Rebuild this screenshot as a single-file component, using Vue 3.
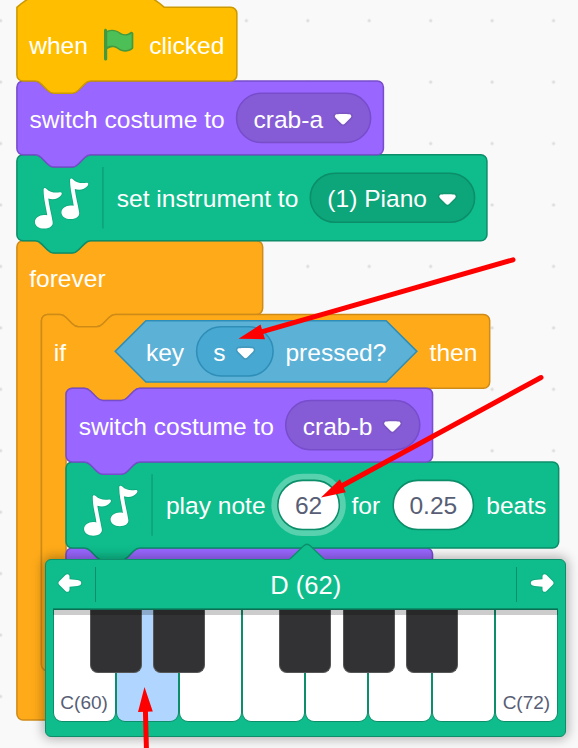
<script setup>
const NOTCH_TOP = 'c2 0 3 1 4 2l4 4c1 1 2 2 4 2h12c2 0 3-1 4-2l4-4c1-1 2-2 4-2'
const NOTCH_BOTTOM = 'c-2 0-3 1-4 2l-4 4c-1 1-2 2-4 2h-12c-2 0-3-1-4-2l-4-4c-1-1-2-2-4-2'
const START = `M0 4a4 4 0 0 1 4-4h8${NOTCH_TOP}`
const CLOSE = 'H4a4 4 0 0 1-4-4z'
const END = `H48${NOTCH_BOTTOM}${CLOSE}`

const sides = (w, h) => `H${w - 4}a4 4 0 0 1 4 4v${h - 8}a4 4 0 0 1-4 4`
const hat = (w, h) => `M0 0c25-22 71-22 96 0${sides(w, h)}${END}`
const stack = (w, h) => `${START}${sides(w, h)}${END}`
const wrap = (w, inner, end = END) =>
  `${START}${sides(w, 48)}H64${NOTCH_BOTTOM}h-8a4 4 0 0 0-4 4v${inner - 8}a4 4 0 0 0 4 4h8${NOTCH_TOP}H${w - 4}a4 4 0 0 1 4 4v24a4 4 0 0 1-4 4${end}`

const ARROW = 'M1.500 11C1.500 10 2 9.500 2.500 9L8.500 3C10 1.500 12.500 2 12.500 4.500V7.200L20.500 8C25.500 8.500 25.500 13.500 20.500 14L12.500 14.800V17.500C12.500 20 10 20.500 8.500 19L2.500 13C2 12.500 1.500 12 1.500 11z'

const blocks = [
  {
    x: 0, y: 152, kind: 'control', d: wrap(160, 232, CLOSE),
    texts: [{ x: 8, y: 30.3, t: 'forever' }],
  },
  {
    x: 0, y: 96, kind: 'music', d: stack(306, 56), icon: true,
    texts: [{ x: 65, y: 33.7, t: 'set instrument to' }, { x: 202.1, y: 33.7, t: '(1) Piano' }],
    menus: [{ x: 191, y: 12, w: 107 }],
    carets: [{ x: 274, y: 24.7 }],
  },
  {
    x: 0, y: 48, kind: 'looks', d: stack(238.6, 48),
    texts: [{ x: 8.2, y: 30.3, t: 'switch costume to' }, { x: 154, y: 30.3, t: 'crab-a' }],
    menus: [{ x: 143, y: 8, w: 87.3 }],
    carets: [{ x: 206, y: 20.5 }],
  },
  {
    x: 0, y: 0, kind: 'event', d: hat(143.2, 48), flag: true,
    texts: [{ x: 8, y: 30.3, t: 'when' }, { x: 86.2, y: 30.3, t: 'clicked' }],
  },
  {
    x: 16, y: 200, kind: 'control', d: wrap(291.8, 152), condition: true,
    texts: [
      { x: 8, y: 30.3, t: 'if' },
      { x: 68, y: 30.3, t: 'key' },
      { x: 111.8, y: 30.3, t: 's' },
      { x: 158.8, y: 30.3, t: 'pressed?' },
      { x: 252.7, y: 30.3, t: 'then' },
    ],
    menus: [{ x: 101, y: 8, w: 49.8, kind: 'sensing' }],
    carets: [{ x: 126.5, y: 20.7 }],
  },
  { x: 32, y: 352, kind: 'looks', d: stack(238.6, 48), texts: [] },
  {
    x: 32, y: 296, kind: 'music', d: stack(320.7, 56), icon: true,
    texts: [
      { x: 65, y: 33.7, t: 'play note' },
      { x: 185.8, y: 33.7, t: 'for' },
      { x: 273.6, y: 33.7, t: 'beats' },
    ],
    inputs: [
      { x: 137.9, y: 12, w: 40, t: '62', active: true },
      { x: 213, y: 12, w: 52.2, t: '0.25' },
    ],
  },
  {
    x: 32, y: 248, kind: 'looks', d: stack(238.6, 48),
    texts: [{ x: 8.2, y: 30.3, t: 'switch costume to' }, { x: 154.1, y: 30.3, t: 'crab-b' }],
    menus: [{ x: 143, y: 8, w: 87.3 }],
    carets: [{ x: 206.1, y: 20.5 }],
  },
]

const keys = [
  { label: 'C(60)', sharp: true },
  { active: true, sharp: true },
  {},
  { sharp: true },
  { sharp: true },
  { sharp: true },
  {},
  { label: 'C(72)' },
]
</script>

<template>
  <main class="workspace">
    <svg class="canvas" width="578" height="748" viewBox="0 0 578 748">
      <defs>
        <pattern id="grid" x="-30" y="-10" width="61.44" height="61.44" patternUnits="userSpaceOnUse">
          <circle class="dot" cx="30.6" cy="30.7" r="1.6" />
        </pattern>
      </defs>
      <rect width="578" height="748" fill="url(#grid)" />
      <g transform="translate(16.9 7.3) scale(1.536)">
        <g v-for="(b, i) in blocks" :key="i" :class="b.kind" :transform="`translate(${b.x} ${b.y})`">
          <path class="shape" :d="b.d" />
          <g v-if="b.flag" transform="translate(54.2 12.4)">
            <path fill="#45993d" d="M20.8 3.7c-.4-.2-.9-.1-1.2.2-2 1.6-4.8 1.6-6.8 0-2.3-1.9-5.6-2.3-8.3-1v-.4c0-.6-.5-1-1-1s-1 .4-1 1v18.8c0 .5.5 1 1 1h.1c.5 0 1-.4 1-1v-6.4c1-.7 2.1-1.2 3.4-1.3 1.2 0 2.4.4 3.4 1.2 2.9 2.3 7 2.3 9.8 0 .3-.2.4-.5.4-.9V4.7c0-.5-.3-.9-.8-1z" />
            <path fill="#4cbf56" d="M20.5 13.9c-2.5 2-6.1 2-8.6 0-2.1-1.7-4.9-2-7.3-.7V4c2.4-1.5 5.5-1.2 7.6.5 2.4 1.9 5.8 1.9 8.3.1z" />
          </g>
          <g v-if="b.icon">
            <path class="divider" d="M56 8v40" />
            <g class="notes" transform="translate(-11.06 -9.9) scale(.217)">
              <path v-for="n in 2" :key="n" :transform="n === 2 ? 'translate(79.5 -28.5)' : null"
                d="M131 150c0-5 5-6 9-2C150 158 165 161 180 158C187 158 187 163 183 168C175 178 160 182 145 177C148 200 154 222 158 246C161 259 150 267 133 267C116 267 105 258 105 247C105 235 118 226 132 226C136 226 139 226 142 227C139 203 131 180 131 150z" />
            </g>
          </g>
          <path v-if="b.condition" class="hexagon" d="M68 4H224.4l20 20l-20 20H68L48 24z" />
          <rect v-for="(m, j) in b.menus" :key="'m' + j" class="menu" :class="m.kind" :x="m.x" :y="m.y" :width="m.w" height="32" rx="16" />
          <g v-for="(n, j) in b.inputs" :key="'n' + j">
            <rect v-if="n.active" class="halo" :x="n.x" :y="n.y" :width="n.w" height="32" rx="16" />
            <rect class="field" :x="n.x" :y="n.y" :width="n.w" height="32" rx="16" />
            <text class="value" :x="n.x + n.w / 2" y="33.7">{{ n.t }}</text>
          </g>
          <text v-for="(t, j) in b.texts" :key="'t' + j" :x="t.x" :y="t.y">{{ t.t }}</text>
          <g v-for="(c, j) in b.carets" :key="'c' + j" :transform="`translate(${c.x} ${c.y})`">
            <path fill="#231f20" opacity=".1" d="M12.71 2.44A2.41 2.41 0 0 1 12 4.16L8.08 8.08a2.45 2.45 0 0 1-3.45 0L.72 4.16A2.42 2.42 0 0 1 0 2.44 2.48 2.48 0 0 1 .71.71C1 .47 1.43 0 6.36 0S11.75.46 12 .71a2.44 2.44 0 0 1 .71 1.73z" />
            <path fill="#fff" d="M6.36 7.79a1.43 1.43 0 0 1-1-.42L1.42 3.45a1.44 1.44 0 0 1 0-2c.56-.56 9.31-.56 9.87 0a1.44 1.44 0 0 1 0 2L7.37 7.37a1.43 1.43 0 0 1-1.01.42z" />
          </g>
        </g>
      </g>
    </svg>

    <section class="picker">
      <svg class="pointer" width="40" height="19" viewBox="0 0 40 19">
        <path d="M1 17L15.500 3Q19 -.5 22.500 3L37 17" />
        <path class="join" d="M1.500 18H36.500" />
      </svg>
      <header class="bar">
        <button class="octave">
          <svg width="26" height="22" viewBox="0 0 26 22"><path class="arrow" :d="ARROW" /></svg>
        </button>
        <h1 class="note">D (62)</h1>
        <button class="octave next">
          <svg width="26" height="22" viewBox="0 0 26 22"><path class="arrow" :d="ARROW" /></svg>
        </button>
      </header>
      <div class="piano">
        <div v-for="(k, i) in keys" :key="i" class="key" :class="{ active: k.active }">
          <span v-if="k.label">{{ k.label }}</span>
          <i v-if="k.sharp" class="sharp"></i>
        </div>
        <div class="shade"></div>
      </div>
    </section>

    <svg class="annotations" width="578" height="748" viewBox="0 0 578 748">
      <path class="line" d="M513 259.800L258 332.800M541 377.500L338 488M146.500 752L145.300 706" />
      <path class="head" d="M238.500 338.700L260.500 324.500L265 339.300zM321 497.500L340 479.200L345.800 492.300zM144.500 687L152.800 711.500L138 712z" />
    </svg>
  </main>
</template>

<style>
body {
  margin: 0;
  overflow: hidden;
}
</style>

<style scoped>
.workspace {
  position: relative;
  width: 578px;
  height: 748px;
  overflow: hidden;
  background: #f9f9f9;
  font-family: "Liberation Sans", Arial, sans-serif;
}
.canvas {
  display: block;
}
.dot {
  fill: #ddd;
}
.event { --fill: #ffbf00; --edge: #cc9900; }
.looks { --fill: #9966ff; --edge: #774dcb; --menu: #855cd6; }
.music { --fill: #0fbd8c; --edge: #0b8e69; --menu: #0da57a; }
.control { --fill: #ffab19; --edge: #cf8b17; }
.sensing { --edge: #2e8eb8; --menu: #47a8d1; }
.shape {
  fill: var(--fill);
  stroke: var(--edge);
}
.menu {
  fill: var(--menu);
  stroke: var(--edge);
}
.hexagon {
  fill: #5cb1d6;
  stroke: #2e8eb8;
}
.field {
  fill: #fff;
  stroke: #0b8e69;
}
.halo {
  fill: none;
  stroke: #fff;
  stroke-width: 8.500px;
  opacity: 0.3;
}
.divider {
  stroke: #0b8e69;
  stroke-opacity: 0.6;
}
.notes {
  fill: #fff;
  stroke: rgba(0, 0, 0, 0.1);
  stroke-width: 5px;
  paint-order: stroke;
}
.canvas text {
  font-size: 16px;
  fill: #fff;
}
.canvas .value {
  fill: #575e75;
  text-anchor: middle;
}
.picker {
  position: absolute;
  left: 45px;
  top: 559px;
  width: 521px;
  height: 178px;
  box-sizing: border-box;
  display: flex;
  flex-direction: column;
  padding: 0 7px 0 6.500px;
  background: #0fbd8c;
  border: 1px solid #0b8e69;
  border-radius: 6px;
  box-shadow: 0 0 12px 1.500px rgba(0, 0, 0, 0.3);
}
.pointer {
  position: absolute;
  left: 242px;
  top: -17px;
  fill: #0fbd8c;
  stroke: #0b8e69;
  stroke-width: 1.200px;
}
.pointer .join {
  stroke: #0fbd8c;
  stroke-width: 3px;
}
.bar {
  flex: 0 0 48px;
  display: flex;
  align-items: center;
  justify-content: space-between;
}
.octave {
  display: flex;
  align-items: center;
  height: 35px;
  width: 43px;
  padding: 0 0 0 4px;
  box-sizing: border-box;
  border: 0;
  border-right: 1px solid #0b8e69;
  background: none;
}
.octave svg {
  position: relative;
  top: -1px;
}
.next {
  width: 42px;
  padding-left: 3px;
  transform: scaleX(-1);
}
.arrow {
  fill: #fff;
  stroke: rgba(0, 0, 0, 0.1);
  stroke-width: 2px;
  paint-order: stroke;
}
.note {
  margin: 1px 0 0;
  color: #fff;
  font-size: 25.500px;
  font-weight: 400;
  line-height: 30px;
}
.piano {
  position: relative;
  display: flex;
  height: 114px;
}
.key {
  position: relative;
  flex: 1;
  display: flex;
  align-items: flex-end;
  justify-content: center;
  box-sizing: border-box;
  padding-bottom: 7px;
  background: #fff;
  border: 1px solid #0b8e69;
  border-top-width: 2px;
  border-radius: 0 0 9px 9px;
  color: #575e75;
  font-size: 19px;
  line-height: 22px;
}
.active {
  background: #b0d6ff;
}
.sharp {
  position: absolute;
  z-index: 1;
  left: 36.400px;
  top: 0;
  width: 52px;
  height: 63px;
  box-sizing: border-box;
  background: #323234;
  border: 1px solid #575757;
  border-top: 0;
  border-radius: 0 0 8px 8px;
}
.shade {
  position: absolute;
  z-index: 2;
  left: 0;
  right: 0;
  top: 1px;
  height: 6px;
  background: rgba(0, 0, 0, 0.2);
}
.annotations {
  position: absolute;
  inset: 0;
}
.line {
  fill: none;
  stroke: #f00;
  stroke-width: 5px;
  stroke-linecap: round;
}
.head {
  fill: #f00;
}
</style>
